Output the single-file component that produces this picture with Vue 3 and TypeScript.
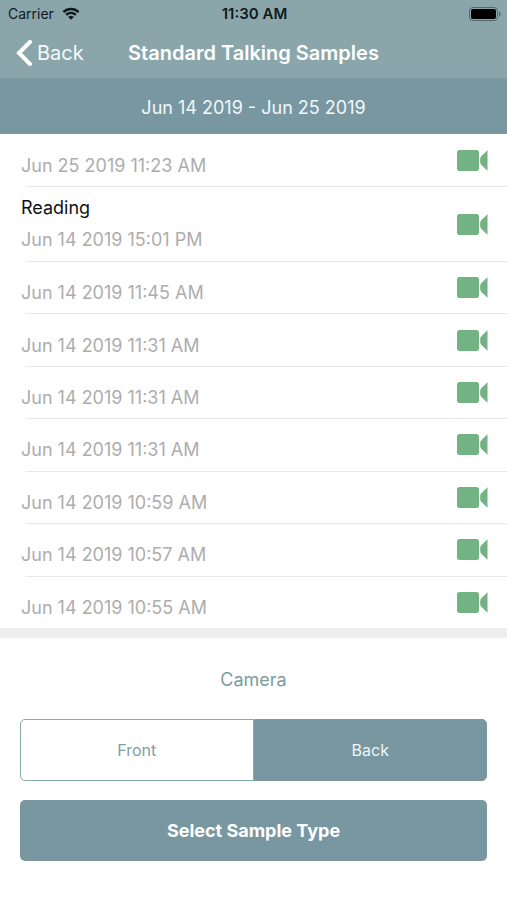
<script setup lang="ts">
import { ref } from 'vue'

interface Sample {
  id: number
  title?: string
  date: string
}

type Camera = 'Front' | 'Back'

const samples: Sample[] = [
  { id: 1, date: 'Jun 25 2019 11:23 AM' },
  { id: 2, title: 'Reading', date: 'Jun 14 2019 15:01 PM' },
  { id: 3, date: 'Jun 14 2019 11:45 AM' },
  { id: 4, date: 'Jun 14 2019 11:31 AM' },
  { id: 5, date: 'Jun 14 2019 11:31 AM' },
  { id: 6, date: 'Jun 14 2019 11:31 AM' },
  { id: 7, date: 'Jun 14 2019 10:59 AM' },
  { id: 8, date: 'Jun 14 2019 10:57 AM' },
  { id: 9, date: 'Jun 14 2019 10:55 AM' },
]

const cameras: Camera[] = ['Front', 'Back']
const camera = ref<Camera>('Back')
</script>

<template>
  <div class="screen">
    <header class="top">
      <div class="status">
        <span class="carrier">
          Carrier
          <svg class="wifi" viewBox="0 0 18 13" aria-hidden="true">
            <path d="M1.4 5.1a10.8 10.8 0 0 1 15.2 0" />
            <path d="M4.2 7.9a6.8 6.8 0 0 1 9.6 0" />
            <path class="dot" d="M9 12.8 6.2 10a4 4 0 0 1 5.6 0z" />
          </svg>
        </span>
        <span class="time">11:30 AM</span>
        <svg class="battery" viewBox="0 0 32 14" aria-hidden="true">
          <rect class="shell" x="0.5" y="0.5" width="28" height="13" rx="3.5" />
          <rect x="2" y="2" width="25" height="10" rx="2" />
          <path class="tip" d="M30 4.5c2 .7 2 4.3 0 5z" />
        </svg>
      </div>
      <nav class="nav">
        <a class="back" href="#">
          <svg class="chevron" viewBox="0 0 16 26" aria-hidden="true">
            <path d="M14 2 3 13l11 11" />
          </svg>
          Back
        </a>
        <h1 class="title">Standard Talking Samples</h1>
      </nav>
    </header>

    <div class="range">Jun 14 2019 - Jun 25 2019</div>

    <ul class="list">
      <li v-for="s in samples" :key="s.id" class="row" :class="{ titled: s.title }">
        <div class="text">
          <span v-if="s.title" class="name">{{ s.title }}</span>
          <span class="date">{{ s.date }}</span>
        </div>
        <svg class="video" viewBox="0 0 32 22" aria-hidden="true">
          <rect x="1" y="1" width="22" height="21" rx="2.5" />
          <path d="M31.5 1.3v20.400l-6-5.700q-1.300-1.200-1.300-2.800v-3.400q0-1.600 1.300-2.800z" />
        </svg>
      </li>
    </ul>

    <section class="controls">
      <h2 id="camera-label" class="label">Camera</h2>
      <div class="segments" role="group" aria-labelledby="camera-label">
        <button
          v-for="c in cameras"
          :key="c"
          type="button"
          class="segment"
          :class="{ active: camera === c }"
          :aria-pressed="camera === c"
          @click="camera = c"
        >
          {{ c }}
        </button>
      </div>
      <button type="button" class="select">Select Sample Type</button>
    </section>
  </div>
</template>

<style>
body {
  margin: 0;
}
</style>

<style scoped>
.screen {
  display: flex;
  flex-direction: column;
  min-height: 100vh;
  background: #fff;
  font-family: Inter, 'Liberation Sans', sans-serif;
  font-size: 18px;
}

.top {
  box-sizing: border-box;
  height: 79px;
  background: #8aa6ab;
  border-bottom: 1px solid #7c999f;
}

.status {
  display: grid;
  grid-template-columns: 1fr auto 1fr;
  align-items: center;
  height: 27px;
  padding: 0 6px 0 8px;
  font-size: 14px;
  color: #10191c;
}

.carrier {
  display: flex;
  align-items: center;
  gap: 8px;
}

.time {
  font-size: 15px;
  font-weight: 600;
}

.wifi {
  width: 18px;
  height: 13px;
  fill: none;
  stroke: #10191c;
  stroke-width: 2.4;
}

.wifi .dot {
  fill: #10191c;
  stroke: none;
}

.battery {
  justify-self: end;
  width: 32px;
  height: 14px;
  fill: #000;
}

.battery .shell {
  fill: none;
  stroke: #55696d;
}

.battery .tip {
  fill: #55696d;
}

.nav {
  display: grid;
  grid-template-columns: 1fr auto 1fr;
  align-items: center;
  height: 51px;
  padding: 0 16px;
  color: #fff;
}

.back {
  display: flex;
  align-items: center;
  gap: 5px;
  font-size: 20px;
  color: #f4fafc;
  text-decoration: none;
}

.chevron {
  width: 16px;
  height: 26px;
  fill: none;
  stroke: #fff;
  stroke-width: 4;
  stroke-linecap: round;
}

.title {
  margin: 0;
  font-size: 20px;
  font-weight: 600;
}

.range {
  box-sizing: border-box;
  height: 55px;
  padding-top: 17px;
  background: #7897a1;
  color: #f1f8fb;
  line-height: 24px;
  text-align: center;
}

.list {
  display: flex;
  flex: 1 0 auto;
  flex-direction: column;
  margin: 0;
  padding: 0;
  list-style: none;
}

.row {
  position: relative;
  box-sizing: border-box;
  display: flex;
  flex: 1 0 52px;
  align-items: center;
  justify-content: space-between;
  padding: 0 19px 0 21px;
}

.titled {
  flex-basis: 74px;
}

.row + .row::before {
  content: '';
  position: absolute;
  top: 0;
  right: 0;
  left: 26px;
  height: 1px;
  background: #e8e8ea;
}

.text {
  display: flex;
  flex-direction: column;
  gap: 8px;
  padding-top: 12px;
  line-height: 24px;
}

.titled .text {
  padding-top: 0;
}

.name {
  color: #111;
}

.date {
  color: #adadad;
}

.video {
  width: 32px;
  height: 22px;
  fill: #73b283;
}

.controls {
  display: flex;
  flex-direction: column;
  padding: 29px 20px 39px;
  border-top: 10px solid #eeeef1;
}

.label {
  margin: 0 0 26px;
  font-size: 18px;
  font-weight: 400;
  line-height: 26px;
  text-align: center;
  color: #7a9ca2;
}

.segments {
  display: flex;
  height: 62px;
  margin-bottom: 19px;
  border-radius: 5px;
}

.segment {
  flex: 1;
  border: 1px solid #86a9a9;
  border-radius: 5px 0 0 5px;
  background: #fff;
  color: #7da0a3;
  font-family: inherit;
  font-size: 16px;
}

.segment:last-child {
  border-radius: 0 5px 5px 0;
}

.segment.active {
  border-color: #7897a1;
  background: #7897a1;
  color: #eef6f9;
}

.select {
  height: 61px;
  border: 0;
  border-radius: 5px;
  background: #7897a1;
  color: #fff;
  font-family: inherit;
  font-size: 18px;
  font-weight: 700;
}
</style>
